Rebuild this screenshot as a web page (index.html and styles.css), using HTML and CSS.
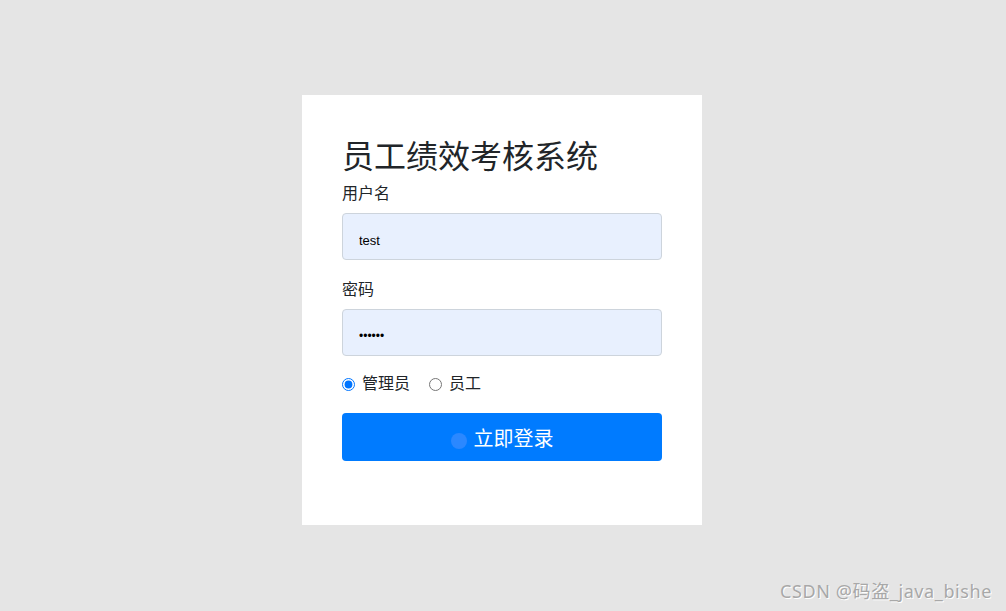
FILE: index.html
```html
<!DOCTYPE html>
<html lang="zh-CN">
<head>
  <meta charset="UTF-8">
  <meta name="viewport" content="width=device-width, initial-scale=1">
  <title>员工绩效考核系统</title>
  <link rel="stylesheet" href="styles.css">
</head>
<body>

  <div class="page">
    <form class="login-box">
      <h1 class="login-title">员工绩效考核系统</h1>

      <label class="field-label" for="username">用户名</label>
      <input class="field-input" type="text" id="username" value="test">

      <label class="field-label" for="password">密码</label>
      <input class="field-input" type="password" id="password" value="123456">

      <div class="role-row">
        <label class="role"><input type="radio" name="role" checked> 管理员</label>
        <label class="role"><input type="radio" name="role"> 员工</label>
      </div>

      <button type="button" class="login-btn">
        <span class="ripple"></span>
        <span>立即登录</span>
      </button>
    </form>
  </div>

  <div class="watermark">CSDN @码盗_java_bishe</div>

</body>
</html>
```

FILE: styles.css
```css
/* ========== GLOBAL ========== */
* {
  box-sizing: border-box;
  margin: 0;
  padding: 0;
}

body {
  font-family: "Liberation Sans", "Noto Sans CJK SC", sans-serif;
  background-color: #e5e5e5;
  color: #212529;
  height: 611px;
  overflow: hidden;
}

/* ========== LAYOUT ========== */
.page {
  display: flex;
  justify-content: center;
  padding-top: 95px;
  padding-right: 2px;
}

.login-box {
  width: 400px;
  height: 430px;
  background: #fff;
  padding: 42px 40px 0;
  display: flex;
  flex-direction: column;
}

.login-title {
  font-size: 32px;
  font-weight: 400;
  line-height: 40px;
  color: #212529;
  margin-bottom: 7px;
}

/* ========== FIELDS ========== */
.field-label {
  font-size: 16px;
  line-height: 20px;
  margin-bottom: 9px;
}

.field-input {
  height: 47px;
  width: 320px;
  padding: 7px 16px 0;
  font-family: "Liberation Sans", sans-serif;
  font-size: 13px;
  color: #000;
  background: #e8f0fe;
  border: 1px solid #cdd4dc;
  border-radius: 4px;
  margin-bottom: 20px;
  outline: none;
}

.field-input[type="password"] {
  font-size: 12px;
}

/* ========== ROLE ========== */
.role-row {
  display: flex;
  gap: 19px;
  height: 20px;
  align-items: center;
  margin-top: -2px;
  margin-bottom: 19px;
}

.role {
  display: flex;
  align-items: center;
  gap: 7px;
  font-size: 16px;
  line-height: 20px;
}

.role input {
  width: 13px;
  height: 13px;
  margin: 1px 0 0;
  accent-color: #0075ff;
}

/* ========== BUTTON ========== */
.login-btn {
  display: flex;
  align-items: center;
  justify-content: center;
  gap: 7px;
  height: 48px;
  width: 320px;
  background: #007bff;
  color: #fff;
  border: none;
  border-radius: 4px;
  font-family: "Liberation Sans", "Noto Sans CJK SC", sans-serif;
  font-size: 20px;
  cursor: pointer;
}

.ripple {
  width: 16px;
  height: 16px;
  margin-top: 8px;
  border-radius: 50%;
  background: #2b88ff;
}

/* ========== WATERMARK ========== */
.watermark {
  position: absolute;
  right: 14px;
  bottom: 8px;
  font-family: "Noto Sans", "Noto Sans CJK SC", sans-serif;
  font-size: 18px;
  letter-spacing: 0.6px;
  color: #a8a8a8;
  text-shadow: 1px 1px 0 #fff;
}
```
